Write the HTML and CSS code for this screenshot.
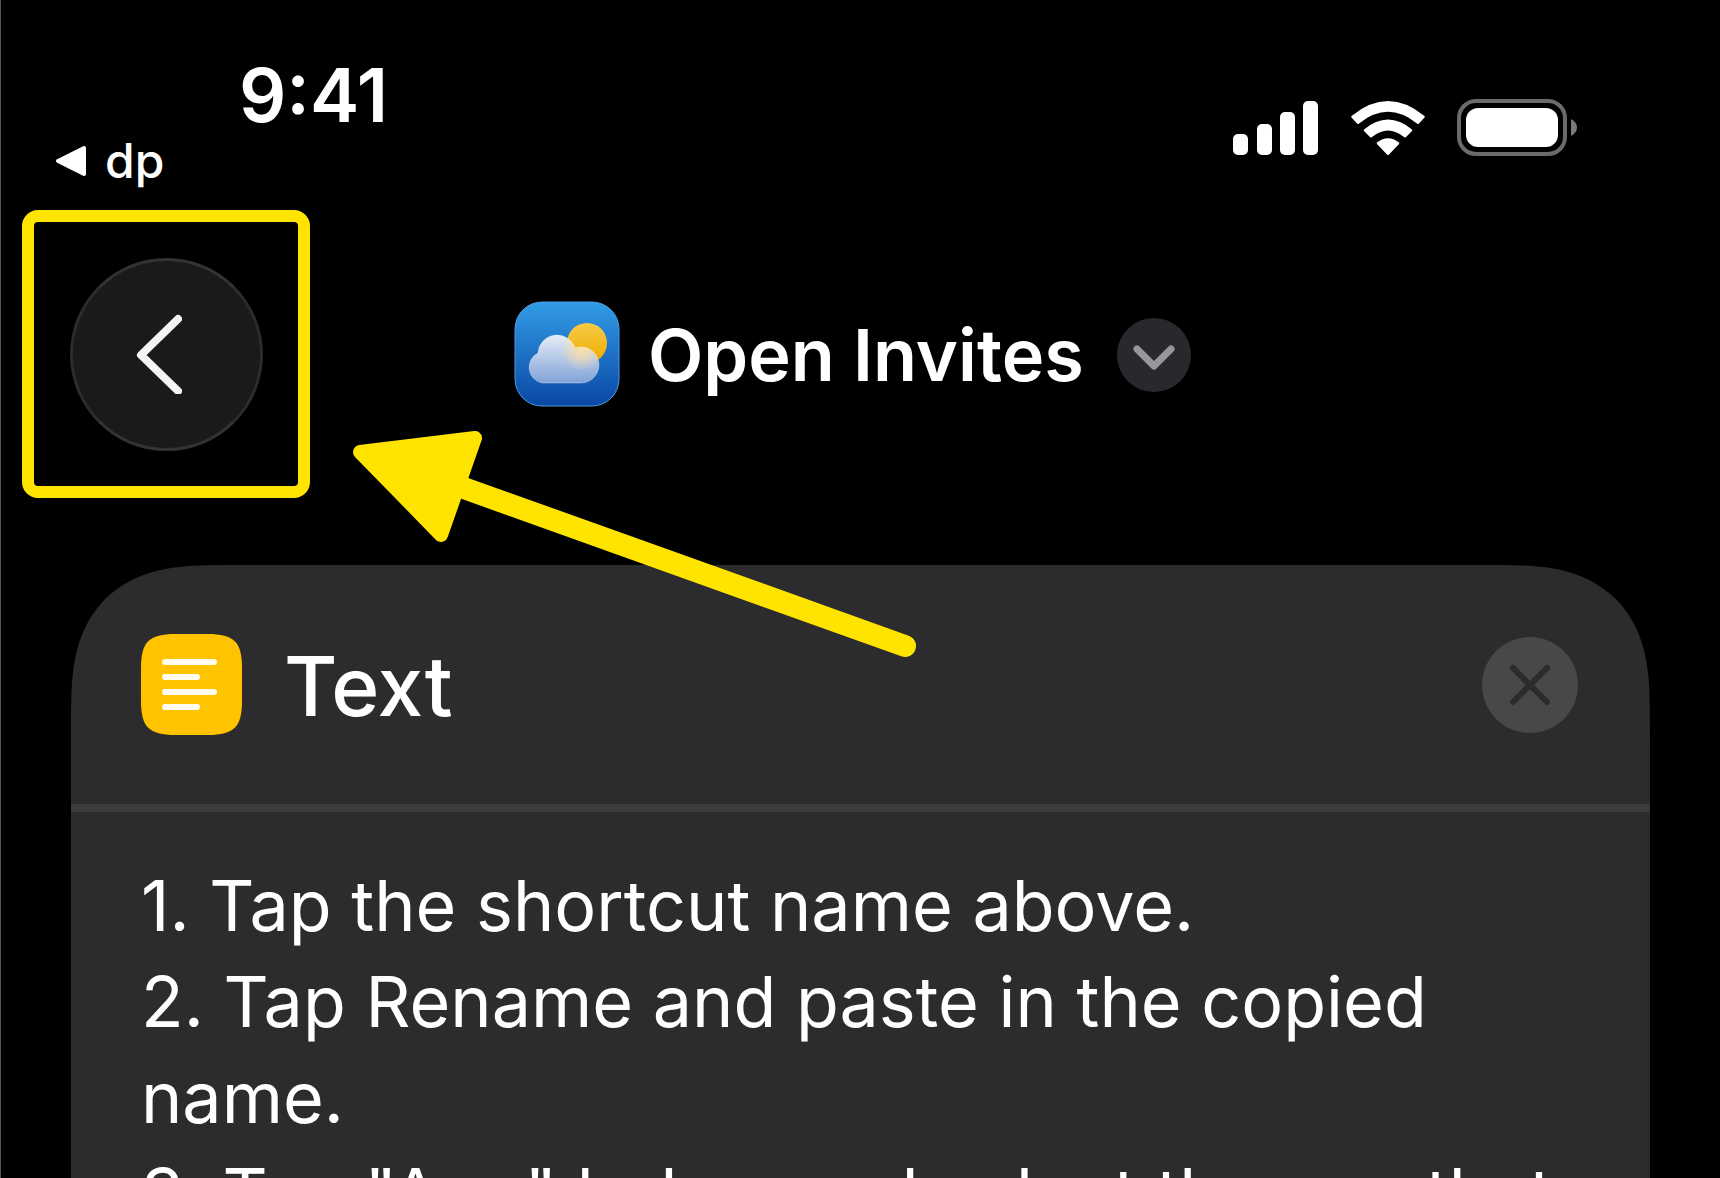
FILE: index.html
```
<!DOCTYPE html>
<html lang="en">
<head>
  <meta charset="UTF-8" />
  <meta name="viewport" content="width=device-width, initial-scale=1" />
  <title>Open Invites</title>
  <link rel="stylesheet" href="styles.css">
</head>
<body>
  <header class="status-bar">
    <div class="status-left">
      <time class="clock">9:41</time>
      <a class="back-app" href="#">
        <svg width="32" height="32" viewBox="0 0 32 32" aria-hidden="true">
          <path d="M3 16 L29 3 V29 Z" fill="#fff" stroke="#fff" stroke-width="4" stroke-linejoin="round"/>
        </svg>
        dp
      </a>
    </div>
    <div class="status-icons">
      <svg width="86" height="54" viewBox="0 0 86 54" role="img" aria-label="Signal">
        <g fill="#fff">
          <rect x="0" y="33" width="15" height="21" rx="5"/>
          <rect x="24" y="23" width="15" height="31" rx="5"/>
          <rect x="47" y="11" width="15" height="43" rx="5"/>
          <rect x="70" y="0" width="15" height="54" rx="5"/>
        </g>
      </svg>
      <svg width="74" height="54" viewBox="0 0 74 54" role="img" aria-label="Wi-Fi">
        <g fill="#fff">
          <path d="M0.500 15 Q37 -15 73.500 15 Q74 16 73.500 16.500 L68 22.500 Q67 23.500 66 22.500 Q37 -1 8 22.500 Q7 23.500 6 22.500 L0.500 16.500 Q0 16 0.500 15 Z"/>
          <path d="M13 28.500 Q37 8.500 61 28.500 Q61.500 29.500 61 30 L55 36 Q54 37 53 36 Q37 23 21 36 Q20 37 19 36 L13 30 Q12.500 29.500 13 28.500 Z"/>
          <path d="M26 41.500 Q37 33 48 41.500 Q48.500 42.500 48 43 L38 53.500 Q37 54.500 36 53.500 L26 43 Q25.500 42.500 26 41.500 Z"/>
        </g>
      </svg>
      <svg width="120" height="58" viewBox="0 0 120 58" role="img" aria-label="Battery">
        <rect x="2" y="2" width="106" height="53" rx="17" fill="none" stroke="#6b6b6b" stroke-width="4"/>
        <rect x="9" y="9" width="92" height="39" rx="12" fill="#fff"/>
        <path d="M114 20 Q120 23 120 28.500 Q120 34 114 37 Z" fill="#7a7a7a"/>
      </svg>
    </div>
  </header>

  <nav class="nav-bar">
    <div class="highlight">
      <button class="back-button" type="button" aria-label="Back">
        <svg width="46" height="80" viewBox="0 0 46 80" aria-hidden="true">
          <path d="M42 5 L5 41 L42 77" fill="none" stroke="#f4f4f4" stroke-width="8" stroke-linecap="round" stroke-linejoin="round"/>
        </svg>
      </button>
    </div>
    <button class="title-button" type="button">
      <svg width="106" height="106" viewBox="0 0 106 106" aria-hidden="true">
        <defs>
          <linearGradient id="sky" x1="0" y1="0" x2="0" y2="1">
            <stop offset="0" stop-color="#329ce6"/>
            <stop offset="1" stop-color="#0a47a5"/>
          </linearGradient>
          <linearGradient id="sun" x1="0" y1="0" x2="0" y2="1">
            <stop offset="0" stop-color="#f7cb46"/>
            <stop offset="1" stop-color="#f0ac00"/>
          </linearGradient>
          <linearGradient id="cloud" x1="0" y1="0" x2="0" y2="1">
            <stop offset="0" stop-color="#eef3fb"/>
            <stop offset="1" stop-color="#7d9fd6"/>
          </linearGradient>
          <radialGradient id="glow">
            <stop offset="0" stop-color="#ffe0a0"/>
            <stop offset="1" stop-color="#ffe0a0" stop-opacity="0"/>
          </radialGradient>
          <clipPath id="cloudShape">
            <path d="M28 82 A16 16 0 0 1 24 52 A19 19 0 0 1 61 47 A18 18 0 1 1 67 82 Z"/>
          </clipPath>
        </defs>
        <rect x="1" y="1" width="104" height="104" rx="27" fill="url(#sky)" stroke="#4b9be0" stroke-width="1"/>
        <circle cx="73" cy="42" r="20" fill="url(#sun)"/>
        <g clip-path="url(#cloudShape)">
          <rect x="10" y="30" width="80" height="54" fill="url(#cloud)"/>
          <circle cx="68" cy="48" r="22" fill="url(#glow)"/>
        </g>
        <path d="M28 82 A16 16 0 0 1 24 52 A19 19 0 0 1 61 47 A18 18 0 1 1 67 82 Z" fill="none" stroke="#fff" stroke-opacity="0.35" stroke-width="1"/>
      </svg>
      <span>Open Invites</span>
      <svg class="chevron" width="76" height="76" viewBox="0 0 76 76" aria-hidden="true">
        <circle cx="38" cy="39" r="37" fill="#29282d"/>
        <path d="M21 33 L38 50 L55 33" fill="none" stroke="#98979e" stroke-width="7" stroke-linecap="round" stroke-linejoin="round"/>
      </svg>
    </button>
  </nav>

  <main class="card">
    <!-- smooth corners, painted over the square card -->
    <svg class="corner corner-left" width="180" height="180" viewBox="0 0 180 180" aria-hidden="true">
      <path d="M0 180 C0 130 0 110 6 85 C12 62 22 47 34 34 C47 22 62 12 85 6 C110 0 130 0 180 0 H-1 V180 Z"/>
    </svg>
    <svg class="corner corner-right" width="180" height="180" viewBox="0 0 180 180" aria-hidden="true">
      <path d="M0 180 C0 130 0 110 6 85 C12 62 22 47 34 34 C47 22 62 12 85 6 C110 0 130 0 180 0 H-1 V180 Z"/>
    </svg>
    <div class="card-header">
      <svg width="101" height="101" viewBox="0 0 101 101" aria-hidden="true">
        <path d="M0 34 C0 8 8 0 34 0 H67 C93 0 101 8 101 34 V67 C101 93 93 101 67 101 H34 C8 101 0 93 0 67 Z" fill="#ffc300"/>
        <path d="M24 28 H73 M24 43 H56 M24 58 H73 M24 73 H56" stroke="#fffdf0" stroke-width="6" stroke-linecap="round"/>
      </svg>
      <h1>Text</h1>
      <button class="close-button" type="button" aria-label="Remove action">
        <svg width="42" height="42" viewBox="0 0 42 42" aria-hidden="true">
          <path d="M4 4 L38 38 M38 4 L4 38" stroke="#2c2c2e" stroke-width="6" stroke-linecap="round"/>
        </svg>
      </button>
    </div>
    <div class="card-body">
      <p>1. Tap the shortcut name above.</p>
      <p>2. Tap Rename and paste in the copied name.</p>
      <p>3. Tap "App" below and select the app that</p>
    </div>
  </main>

  <svg class="arrow" width="570" height="232" viewBox="0 0 570 232" aria-hidden="true">
    <path d="M8 22 L123 8 L89 105 Z" fill="#ffe400" stroke="#ffe400" stroke-width="14" stroke-linejoin="round"/>
    <path d="M95 52 L553 216" stroke="#ffe400" stroke-width="22" stroke-linecap="round"/>
  </svg>
</body>
</html>
```
FILE: styles.css
```
* {
  box-sizing: border-box;
}

body {
  margin: 0;
  height: 100vh;
  overflow: hidden;
  position: relative;
  background-color: #000;
  border-left: 1px solid #555;
  color: #fff;
  font-family: Inter, "Liberation Sans", sans-serif;
}

button {
  border: none;
  padding: 0;
  background: none;
  color: inherit;
  font-family: inherit;
  cursor: pointer;
}

svg {
  display: block;
  flex: none;
}

.status-bar {
  display: flex;
  justify-content: space-between;
  align-items: flex-start;
  height: 210px;
  padding: 50px 143px 0 54px;
}

.clock {
  display: block;
  margin-left: 184px;
  font-size: 74px;
  font-weight: 600;
  line-height: 90px;
}

.back-app {
  display: flex;
  align-items: center;
  gap: 18px;
  color: #fff;
  font-size: 48px;
  font-weight: 500;
  line-height: 42px;
  text-decoration: none;
}

.status-icons {
  display: flex;
  align-items: center;
  gap: 32px;
  padding-top: 49px;
}

.nav-bar {
  display: flex;
  align-items: center;
  gap: 204px;
  padding-left: 21px;
}

.highlight {
  display: flex;
  justify-content: center;
  align-items: center;
  width: 288px;
  height: 288px;
  border: 12px solid #ffe400;
  border-radius: 16px;
}

.back-button {
  display: flex;
  justify-content: center;
  align-items: center;
  width: 193px;
  height: 193px;
  padding-right: 14px;
  border-radius: 50%;
  border: 3px solid #2c2c2c;
  border-top-color: #333;
  border-bottom-color: #333;
  background-color: #1a1a1a;
}

.title-button {
  display: flex;
  align-items: center;
  gap: 28px;
  font-size: 72px;
  font-weight: 600;
  line-height: 96px;
}

.title-button span {
  padding-top: 2px;
}

.chevron {
  margin-left: 4px;
}

.card {
  position: relative;
  margin: 67px 70px 0 70px;
  background-color: #2c2c2e;
}

.corner {
  position: absolute;
  top: 0;
  fill: #000;
}

.corner-left {
  left: 0;
}

.corner-right {
  right: 0;
  transform: scaleX(-1);
}

.card-header {
  display: flex;
  align-items: center;
  gap: 42px;
  height: 247px;
  padding: 0 72px 0 70px;
  border-bottom: 8px solid #3b3b3d;
}

h1 {
  margin: 0;
  padding-top: 4px;
  font-size: 82px;
  font-weight: 500;
  line-height: 100px;
}

.close-button {
  display: flex;
  justify-content: center;
  align-items: center;
  width: 96px;
  height: 96px;
  margin-left: auto;
  border-radius: 50%;
  background-color: #48484b;
}

.card-body {
  padding: 46px 70px;
  font-size: 70px;
  line-height: 96px;
}

.card-body p {
  margin: 0;
}

.arrow {
  position: absolute;
  top: 430px;
  left: 351px;
}
```
